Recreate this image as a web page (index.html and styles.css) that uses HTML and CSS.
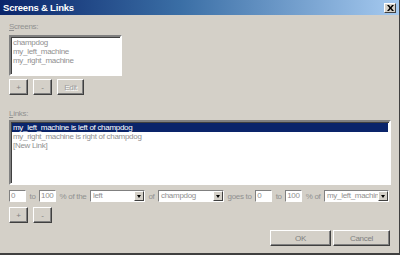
FILE: index.html
```html
<!DOCTYPE html>
<html>
<head>
<meta charset="utf-8">
<link rel="stylesheet" href="styles.css">
</head>
<body>
<div class="dialog">
  <div class="titlebar">
    <span class="title">Screens &amp; Links</span>
    <span class="close"><svg width="7" height="6" viewBox="0 0 7 6"><path d="M0 0h2l1.5 2 1.5-2h2l-2.5 3 2.5 3h-2l-1.5-2-1.5 2h-2l2.5-3z" fill="#000"/></svg></span>
  </div>
  <div class="content">
    <div class="label lbl-screens"><u>S</u>creens:</div>
    <div class="listbox screens">
      <div class="item">champdog</div>
      <div class="item">my_left_machine</div>
      <div class="item">my_right_machine</div>
    </div>
    <div class="btnrow">
      <div class="btn small">+</div>
      <div class="btn small">-</div>
      <div class="btn edit">Edit</div>
    </div>
    <div class="label lbl-links"><u>L</u>inks:</div>
    <div class="listbox links">
      <div class="item sel">my_left_machine is left of champdog</div>
      <div class="item">my_right_machine is right of champdog</div>
      <div class="item">[New Link]</div>
    </div>
    <div class="linkrow">
      <div class="field w17">0</div>
      <span class="txt">to</span>
      <div class="field w17">100</div>
      <span class="txt">% of the</span>
      <div class="combo w55"><span class="cv">left</span><span class="arrow"></span></div>
      <span class="txt">of</span>
      <div class="combo w66"><span class="cv">champdog</span><span class="arrow"></span></div>
      <span class="txt">goes to</span>
      <div class="field w17">0</div>
      <span class="txt">to</span>
      <div class="field w17">100</div>
      <span class="txt">% of</span>
      <div class="combo w65"><span class="cv">my_left_machin</span><span class="arrow"></span></div>
    </div>
    <div class="btnrow second">
      <div class="btn small">+</div>
      <div class="btn small">-</div>
    </div>
    <div class="footer">
      <div class="btn big ok">OK</div>
      <div class="btn big cancel">Cancel</div>
    </div>
  </div>
</div>
</body>
</html>
```
FILE: styles.css
```css
* { box-sizing: border-box; }
html, body { margin: 0; padding: 0; }
body {
  width: 400px;
  height: 255px;
  overflow: hidden;
  background: #d4d0c8;
  font-family: "Liberation Sans", Arial, sans-serif;
  font-size: 8px;
  letter-spacing: -0.3px;
  color: #8a8a8a;
}
.dialog {
  width: 400px;
  height: 255px;
  background: #d4d0c8;
  border-right: 1px solid #404040;
  border-bottom: 2px solid #404040;
  display: flex;
  flex-direction: column;
}
.titlebar {
  height: 15px;
  background: linear-gradient(to right, #0a246a 0%, #3a6ea5 45%, #a6caf0 100%);
  display: flex;
  align-items: center;
  justify-content: space-between;
  padding: 0 3px 0 3px;
}
.title {
  color: #fff;
  font-weight: bold;
  font-size: 9.5px;
  letter-spacing: -0.2px;
  font-family: "Liberation Sans", Arial, sans-serif;
}
.close {
  width: 12px;
  height: 10px;
  background: #d4d0c8;
  border: 1px solid;
  border-color: #fff #404040 #404040 #fff;
  display: flex;
  align-items: center;
  justify-content: center;
}
.content {
  padding: 7px 9px 0 9px;
  display: flex;
  flex-direction: column;
  flex: 1;
}
.label { height: 10px; line-height: 10px; color: #909090; }
.label u { text-decoration: underline; }
.lbl-screens { margin-top: 0; margin-bottom: 3px; }
.listbox {
  background: #fff;
  border: 2px solid;
  border-color: #808080 #fff #fff #808080;
  box-shadow: inset 1px 1px 0 #404040;
  padding: 1px 1px;
}
.screens { width: 113px; height: 41px; }
.item { height: 9px; line-height: 9px; padding-left: 1px; white-space: nowrap; color: #909090; }
.item.sel { background: #0a246a; color: #fff; }
.btnrow { display: flex; gap: 5px; margin-top: 3px; }
.btn {
  height: 16px;
  border: 1px solid;
  border-color: #fff #404040 #404040 #fff;
  box-shadow: inset -1px -1px 0 #808080;
  display: flex;
  align-items: center;
  justify-content: center;
  color: #808080;
  font-size: 8px;
}
.btn.small { width: 19px; }
.btn.edit { width: 27px; color: #a0a0a0; text-shadow: 1px 1px 0 #fff; }
.lbl-links { margin-top: 14px; margin-bottom: 1px; }
.links { width: 382px; height: 65px; }
.linkrow {
  display: flex;
  align-items: center;
  justify-content: space-between;
  width: 380px;
  margin-top: 5px;
  height: 12px;
}
.field {
  height: 12px;
  background: #fff;
  border: 1px solid;
  border-color: #808080 #fff #fff #808080;
  line-height: 10px;
  padding-left: 1px;
  color: #909090;
}
.w17 { width: 17px; }
.txt { color: #909090; white-space: nowrap; }
.combo {
  height: 12px;
  background: #fff;
  border: 1px solid;
  border-color: #808080 #fff #fff #808080;
  display: flex;
  align-items: stretch;
  color: #909090;
}
.cv { flex: 1; line-height: 10px; padding-left: 2px; overflow: hidden; white-space: nowrap; }
.arrow {
  width: 10px;
  background: #d4d0c8;
  border: 1px solid;
  border-color: #fff #404040 #404040 #fff;
  position: relative;
}
.arrow::after {
  content: "";
  position: absolute;
  left: 2px;
  top: 3px;
  border-left: 2px solid transparent;
  border-right: 2px solid transparent;
  border-top: 3px solid #000;
}
.w55 { width: 55px; }
.w66 { width: 66px; }
.w65 { width: 65px; }
.second { margin-top: 5px; }
.footer {
  display: flex;
  justify-content: flex-end;
  gap: 2px;
  margin-top: 7px;
  padding-right: 0;
}
.btn.big { height: 16px; }
.ok { width: 61px; }
.cancel { width: 57px; }
```
